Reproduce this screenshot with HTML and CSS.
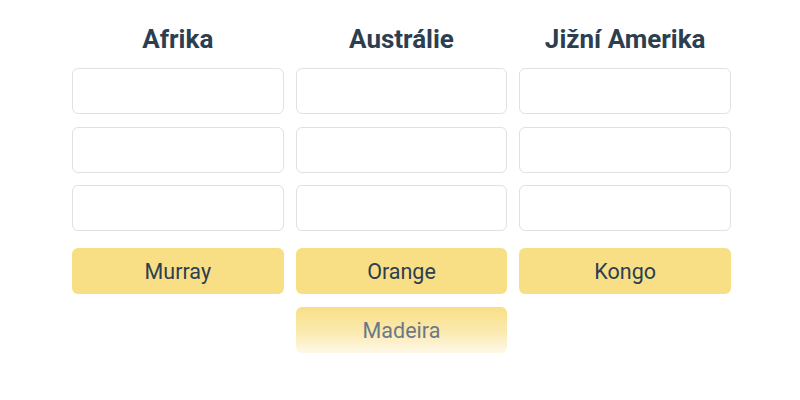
FILE: index.html
```html
<!DOCTYPE html>
<html>
<head>
<meta charset="utf-8">
<link rel="stylesheet" href="styles.css">
</head>
<body>
<div class="board">
  <div class="col">
    <h2 class="title">Afrika</h2>
    <div class="slot"></div>
    <div class="slot"></div>
    <div class="slot"></div>
    <div class="chip first">Murray</div>
  </div>
  <div class="col">
    <h2 class="title">Austrálie</h2>
    <div class="slot"></div>
    <div class="slot"></div>
    <div class="slot"></div>
    <div class="chip first">Orange</div>
    <div class="chip fade">Madeira</div>
  </div>
  <div class="col">
    <h2 class="title">Jižní Amerika</h2>
    <div class="slot"></div>
    <div class="slot"></div>
    <div class="slot"></div>
    <div class="chip first">Kongo</div>
  </div>
</div>
</body>
</html>
```
FILE: styles.css
```css
html, body {
  margin: 0;
  padding: 0;
  background: #ffffff;
  font-family: Roboto, "Liberation Sans", sans-serif;
}
.board {
  display: grid;
  grid-template-columns: repeat(3, 1fr);
  column-gap: 12px;
  width: 659px;
  margin: 25px 0 0 72px;
}
.col {
  display: flex;
  flex-direction: column;
}
.title {
  margin: 0 0 15px;
  height: 28px;
  line-height: 28px;
  font-size: 26px;
  font-weight: 700;
  color: #2c3e50;
  text-align: center;
}
.slot {
  height: 46px;
  box-sizing: border-box;
  border: 1px solid #dde2e7;
  border-radius: 6px;
  margin-bottom: 12.5px;
}
.chip {
  height: 46px;
  box-sizing: border-box;
  border-radius: 6px;
  background: #f8df86;
  color: #2c3e50;
  font-size: 21.5px;
  display: flex;
  align-items: center;
  justify-content: center;
  margin-bottom: 13px;
}
.chip.first {
  margin-top: 4.5px;
}
.chip.fade {
  background: linear-gradient(to bottom, #f8df86 0%, #fbeab0 55%, #fef8e8 100%);
  color: #6a7889;
}
```
